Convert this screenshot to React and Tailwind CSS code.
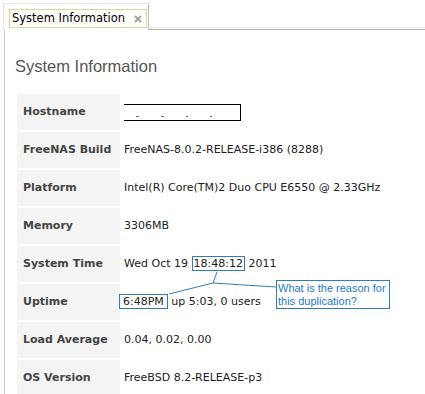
import React from 'react';

const ROWS = [
  { label: 'Hostname', value: 'hidden' },
  { label: 'FreeNAS Build', value: 'FreeNAS-8.0.2-RELEASE-i386 (8288)' },
  { label: 'Platform', value: 'Intel(R) Core(TM)2 Duo CPU E6550 @ 2.33GHz' },
  { label: 'Memory', value: '3306MB' },
  { label: 'System Time', value: 'time' },
  { label: 'Uptime', value: 'uptime' },
  { label: 'Load Average', value: '0.04, 0.02, 0.00' },
  { label: 'OS Version', value: 'FreeBSD 8.2-RELEASE-p3' },
];

function Value({ row }) {
  if (row.value === 'hidden') {
    // redacted hostname
    return (
      <span className="flex h-[17px] w-[117px] items-end gap-[22px] border border-l-0 border-black pb-[3px] pl-[12px]">
        <span className="h-px w-[3px] bg-gray-500" />
        <span className="h-px w-[3px] bg-gray-500" />
        <span className="h-px w-[2px] bg-gray-500" />
        <span className="h-px w-[2px] bg-gray-500" />
      </span>
    );
  }
  if (row.value === 'time') {
    return (
      <span>
        Wed Oct 19{' '}
        <span className="border border-[#2f7dbd] px-[1px]">18:48:12</span> 2011
      </span>
    );
  }
  if (row.value === 'uptime') {
    return (
      <span className="-ml-[5px]">
        <span className="border border-[#2f7dbd] px-[3px]">6:48PM</span> up 5:03, 0 users
      </span>
    );
  }
  return <span>{row.value}</span>;
}

export default function App() {
  return (
    <div className="relative h-[394px] w-[425px] overflow-hidden bg-white font-['DejaVu_Sans',sans-serif] text-[11px] text-[#222]">
      {/* Tab strip */}
      <div className="flex h-[30px] items-end">
        <div className="ml-[3px] h-[27px] w-[146px] border-t border-l border-r border-t-[#e6e6e6] border-l-[#e3e3e3] border-r-[#bdbdbd] bg-white pl-[5px] pt-[5px]">
          <div className="flex h-[19px] w-[138px] items-center justify-between border border-[#e4d39c] bg-[#fffef8] pl-[2px] pr-[3px] text-[11.5px] text-black">
            <span>System Information</span>
            <svg width="8" height="8" viewBox="0 0 8 8" className="mr-[1px]">
              <path d="M1 1 L7 7 M7 1 L1 7" stroke="#a3a3a3" strokeWidth="2" />
            </svg>
          </div>
        </div>
        <div className="h-[3px] flex-1 border-t border-b border-t-[#f0f0f0] border-b-[#b5b5b5]" />
      </div>

      {/* Panel */}
      <div className="ml-[4px] h-[364px] border-l border-[#c8c8c8] pl-[12px]">
        <h1 className="-ml-[2px] pt-[26px] font-['Liberation_Sans',sans-serif] text-[16.5px] leading-[20px] text-[#555]">
          System Information
        </h1>
        <div className="mt-[18px] flex flex-col gap-[2px]">
          {ROWS.map((row) => (
            <div key={row.label} className="flex h-[36px]">
              <div className="flex w-[103px] items-center bg-[#f4f4f4] pl-[6px] font-bold text-[#444]">
                {row.label}
              </div>
              <div className="flex items-center pl-[4px]">
                <Value row={row} />
              </div>
            </div>
          ))}
        </div>
      </div>

      {/* Annotation callout */}
      <svg className="absolute left-0 top-0" width="425" height="394">
        <path d="M217 272 L213 283 L169 294 M213 283 L276 287" stroke="#2f7dbd" strokeWidth="1" fill="none" />
      </svg>
      <div className="absolute left-[276px] top-[280px] h-[29px] w-[114px] whitespace-nowrap border border-[#2f7dbd] bg-white pl-[1px] pt-[1px] font-['Liberation_Sans',sans-serif] text-[11px] leading-[13px] text-[#1f78d1]">
        What is the reason for
        <br />
        this duplication?
      </div>
    </div>
  );
}
